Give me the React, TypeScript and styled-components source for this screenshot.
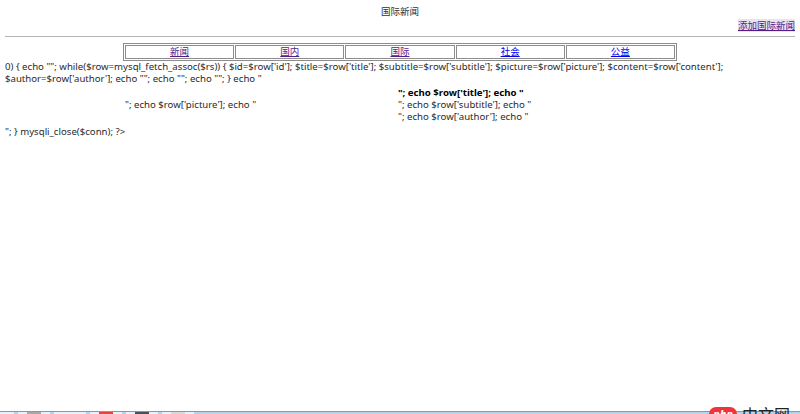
import React from 'react';
import styled, { createGlobalStyle } from 'styled-components';

const GlobalStyle = createGlobalStyle`
  html, body {
    margin: 0;
    padding: 0;
    background: #fff;
  }
  body {
    font-family: "Noto Sans", "Noto Sans CJK SC", sans-serif;
    font-size: 9.65px;
    line-height: 12px;
    color: #2a2a2a;
    overflow: hidden;
  }
`;

const Page = styled.div`
  position: relative;
  height: 414px;
  display: flex;
  flex-direction: column;
  overflow: hidden;
`;

const Content = styled.div`
  flex: 1;
  padding: 6px 5px 0;
`;

const Title = styled.div`
  text-align: center;
  font-size: 9.5px;
  height: 13px;
  color: #333;
`;

const AddRow = styled.div`
  text-align: right;
  font-size: 9.5px;
  height: 14px;
  margin-top: 1px;
`;

const AddLink = styled.a`
  color: #551a8b;
  text-decoration: underline;
  background: #e9e3f0;
`;

const Rule = styled.hr`
  margin: 2px 0 6px;
  border: 0;
  border-top: 1px solid #b4b4b4;
`;

const NavTable = styled.table`
  width: 554px;
  margin: 0 auto;
  border: 1px solid #8c8c8c;
  border-spacing: 1px;
  table-layout: fixed;
`;

const NavCell = styled.td`
  border: 1px solid #8c8c8c;
  padding: 0;
  height: 12px;
  text-align: center;
  font-size: 9.5px;
  line-height: 12px;
`;

const NavLink = styled.a<{ $visited?: boolean }>`
  color: ${p => (p.$visited ? '#551a8b' : '#0000ee')};
  text-decoration: underline;
`;

const Rows = styled.div`
  display: grid;
  grid-template-columns: 273px 282px;
  margin-left: 120px;
  padding-top: 2px;
`;

const PictureCell = styled.div`
  align-self: center;
`;

const TextCell = styled.div`
  display: flex;
  flex-direction: column;
`;

const Strong = styled.span`
  font-weight: bold;
  color: #000;
`;

const Footer = styled.div`
  margin-top: 3px;
`;

const Taskbar = styled.div`
  height: 3px;
  display: flex;
  gap: 4px;
  background: #b5d3ea;
  border-top: 1px solid #8c98a4;
  box-sizing: border-box;
`;

const TaskTab = styled.div<{ $first?: boolean }>`
  width: ${p => (p.$first ? 14 : 32)}px;
  display: flex;
  justify-content: center;
  background: #e6f2fb;
`;

const TabIcon = styled.span<{ $color: string }>`
  width: 14px;
  background: ${p => p.$color};
`;

const Watermark = styled.div`
  position: absolute;
  right: 10px;
  bottom: 0;
  height: 8px;
  display: flex;
  align-items: flex-start;
  gap: 5px;
  overflow: hidden;
`;

const PhpBadge = styled.span`
  margin-top: 1px;
  background: #f0343c;
  color: #fff;
  font-size: 11px;
  font-weight: bold;
  font-style: italic;
  line-height: 14px;
  padding: 0 4px;
  border-radius: 8px;
`;

const SiteName = styled.span`
  color: #222;
  font-size: 16px;
  line-height: 18px;
`;

const navItems = [
  { label: '新闻', visited: true },
  { label: '国内', visited: true },
  { label: '国际', visited: true },
  { label: '社会', visited: false },
  { label: '公益', visited: false },
];

const tabIcons = ['', '#a8a8a8', '', '#e0483c', '#4a5058', '#d8d8d8'];

const App: React.FC = () => {
  return (
    <Page>
      <GlobalStyle />
      <Content>
        <Title>国际新闻</Title>
        <AddRow>
          <AddLink href="#">添加国际新闻</AddLink>
        </AddRow>
        <Rule />
        <NavTable>
          <tbody>
            <tr>
              {navItems.map(item => (
                <NavCell key={item.label}>
                  <NavLink href="#" $visited={item.visited}>{item.label}</NavLink>
                </NavCell>
              ))}
            </tr>
          </tbody>
        </NavTable>
        <div>
          0) {'{'} echo ""; while($row=mysql_fetch_assoc($rs)) {'{'} $id=$row['id']; $title=$row['title']; $subtitle=$row['subtitle']; $picture=$row['picture']; $content=$row['content'];
          <br />
          $author=$row['author']; echo ""; echo ""; echo ""; {'}'} echo "
        </div>
        <Rows>
          <PictureCell>"; echo $row['picture']; echo "</PictureCell>
          <TextCell>
            <Strong>"; echo $row['title']; echo "</Strong>
            <span>"; echo $row['subtitle']; echo "</span>
            <span>"; echo $row['author']; echo "</span>
          </TextCell>
        </Rows>
        <Footer>"; {'}'} mysqli_close($conn); ?&gt;</Footer>
      </Content>
      <Taskbar>
        {tabIcons.map((color, i) => (
          <TaskTab key={i} $first={i === 0}>
            {color && <TabIcon $color={color} />}
          </TaskTab>
        ))}
      </Taskbar>
      <Watermark>
        <PhpBadge>php</PhpBadge>
        <SiteName>中文网</SiteName>
      </Watermark>
    </Page>
  );
};

export default App;
